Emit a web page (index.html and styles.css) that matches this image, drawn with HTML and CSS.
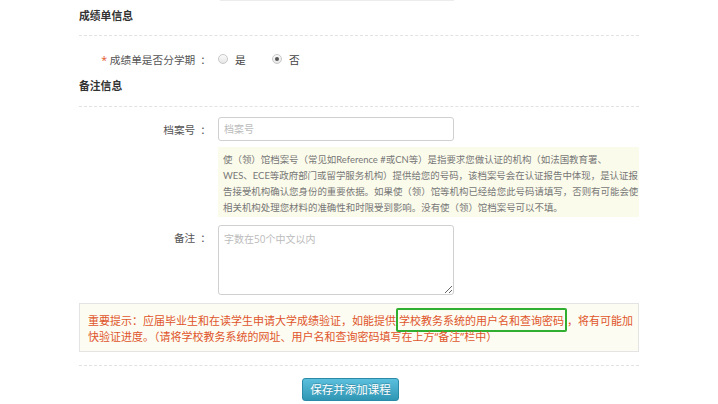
FILE: index.html
```html
<!DOCTYPE html>
<html lang="zh-CN">
<head>
<meta charset="utf-8">
<link rel="stylesheet" href="styles.css">
</head>
<body>
<div class="page">
  <div class="prev-row"><div class="prev-input"></div></div>

  <div class="section-title">成绩单信息</div>

  <div class="row radio-row">
    <div class="label"><span class="req">*</span> 成绩单是否分学期<span class="colon">：</span></div>
    <div class="radios">
      <span class="radio-opt"><span class="radio"></span>是</span>
      <span class="radio-opt"><span class="radio checked"></span>否</span>
    </div>
  </div>

  <div class="section-title second">备注信息</div>

  <div class="row input-row">
    <div class="label">档案号<span class="colon">：</span></div>
    <div class="field"><div class="input placeholder">档案号</div></div>
  </div>

  <div class="row note-row">
    <div class="label"></div>
    <div class="note">使（领）馆档案号（常见如Reference #或CN等）是指要求您做认证的机构（如法国教育署、<br>WES、ECE等政府部门或留学服务机构）提供给您的号码，该档案号会在认证报告中体现，是认证报<br>告接受机构确认您身份的重要依据。如果使（领）馆等机构已经给您此号码请填写，否则有可能会使<br>相关机构处理您材料的准确性和时限受到影响。没有使（领）馆档案号可以不填。</div>
  </div>

  <div class="row textarea-row">
    <div class="label">备注<span class="colon">：</span></div>
    <div class="field"><textarea class="textarea" placeholder="字数在50个中文以内"></textarea></div>
  </div>

  <div class="important">重要提示：应届毕业生和在读学生申请大学成绩验证，如能提供<span class="mark">学校教务系统的用户名和查询密码</span>，将有可能加<br>快验证进度。（请将学校教务系统的网址、用户名和查询密码填写在上方“备注”栏中）</div>

  <div class="actions">
    <button class="btn">保存并添加课程</button>
  </div>
</div>
</body>
</html>
```
FILE: styles.css
```css
* { box-sizing: border-box; }
html, body { margin: 0; padding: 0; background: #fff; }
body {
  font-family: "Open Sans", "Noto Sans CJK SC", sans-serif;
  color: #555;
  overflow: hidden;
}
.page {
  width: 560px;
  margin: 0 auto;
}
.prev-row {
  display: flex;
  padding-left: 141px;
  height: 1px;
}
.prev-input {
  width: 234px;
  height: 1px;
  background: #ececec;
}
.section-title {
  font-size: 10.8px;
  font-weight: bold;
  color: #333;
  line-height: 20px;
  padding-top: 5px;
  padding-bottom: 9px;
  border-bottom: 1px dashed #e2e2e2;
}
.section-title.second {
  margin-top: 7px;
  padding-top: 0;
  padding-bottom: 10px;
}
.row {
  display: flex;
  align-items: center;
}
.label {
  width: 129px;
  margin-right: 10px;
  text-align: right;
  font-size: 10.7px;
  color: #555;
  flex: none;
}
.colon {
  display: inline-block;
  margin-left: 5px;
  margin-right: -3px;
}
.req { color: #e4572e; }
.radio-row {
  margin-top: 13px;
  height: 20px;
}
.radios {
  display: flex;
  align-items: center;
  font-size: 10.7px;
  color: #444;
}
.radio-opt {
  display: flex;
  align-items: center;
  width: 54px;
}
.radio {
  width: 10px;
  height: 10px;
  border-radius: 50%;
  border: 1px solid #c8c8c8;
  background: linear-gradient(#fafafa, #e6e6e6);
  margin-right: 7px;
  position: relative;
}
.radio.checked::after {
  content: "";
  position: absolute;
  left: 2px;
  top: 2px;
  width: 4px;
  height: 4px;
  border-radius: 50%;
  background: #555;
}
.input-row { margin-top: 10px; }
.input {
  width: 236px;
  height: 24px;
  border: 1px solid #d0d0d0;
  border-radius: 3px;
  padding-left: 5px;
  font-size: 10px;
  line-height: 22px;
}
.placeholder { color: #bbb; }
.note-row { margin-top: 6px; }
.note {
  width: 421px;
  background: #fbfbeb;
  color: #777;
  font-family: "Lato", "Noto Sans CJK SC", sans-serif;
  font-size: 9.45px;
  line-height: 16px;
  padding: 5px 0 1px 5px;
  white-space: nowrap;
}
.textarea-row {
  margin-top: 8px;
  align-items: flex-start;
}
.textarea-row .label { padding-top: 5px; }
.textarea {
  display: block;
  width: 236px;
  height: 70px;
  border: 1px solid #d0d0d0;
  border-radius: 3px;
  padding: 5px 5px;
  font-family: "Open Sans", "Noto Sans CJK SC", sans-serif;
  font-size: 10px;
  margin: 0;
}
.textarea::placeholder { color: #bbb; }
.important {
  margin-top: 8px;
  border: 1px solid #e4e4e4;
  background: #fcfcf2;
  color: #e0552b;
  font-size: 11px;
  line-height: 16px;
  padding: 9px 8px 6px 8px;
  white-space: nowrap;
}
.mark {
  border: 2px solid #2fae2f;
  padding: 3px 1px 2px 1px;
  border-radius: 2px;
}
.actions {
  margin-top: 13px;
  border-top: 1px dashed #e2e2e2;
  padding-top: 11px;
  padding-left: 223px;
}
.btn {
  width: 97px;
  height: 23px;
  border: 1px solid #2a8aa8;
  border-radius: 3px;
  background: linear-gradient(#5bc0de, #2f96b4);
  color: #fff;
  font-family: "Open Sans", "Noto Sans CJK SC", sans-serif;
  font-size: 11.5px;
  text-shadow: 0 -1px 0 rgba(0,0,0,0.2);
  padding: 0;
}
```
